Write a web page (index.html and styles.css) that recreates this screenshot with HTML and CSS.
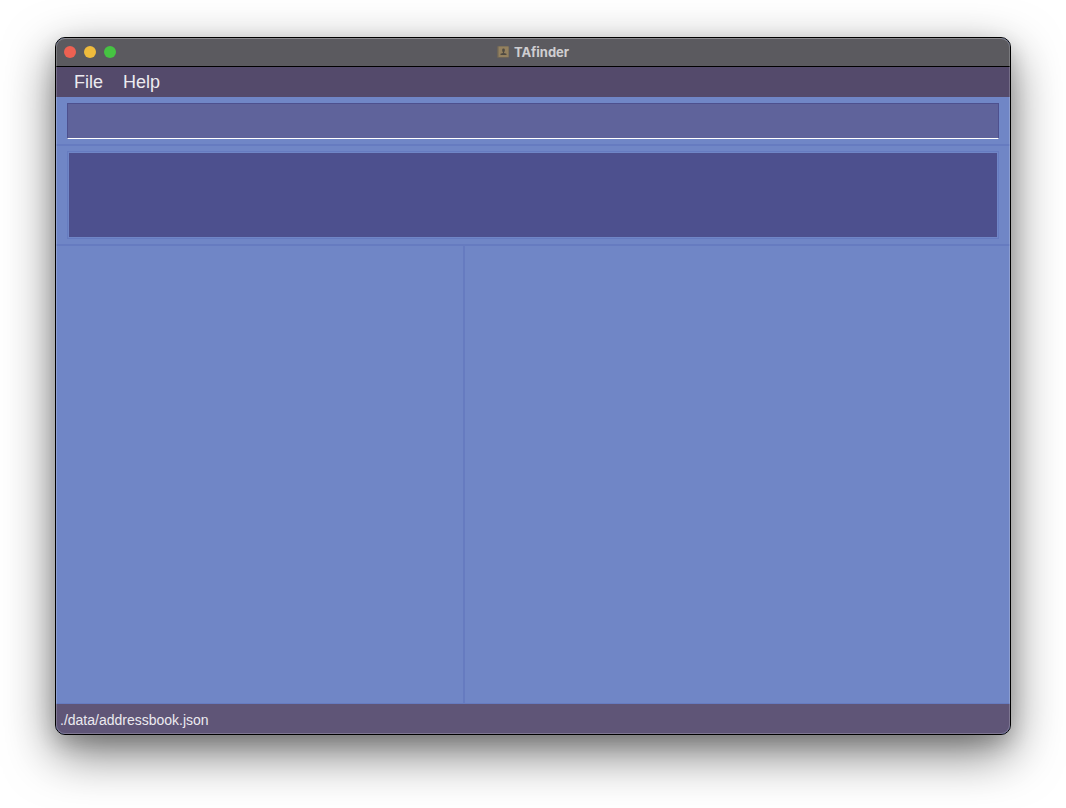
FILE: index.html
```html
<!DOCTYPE html>
<html lang="en">
<head>
<meta charset="utf-8">
<title>TAfinder</title>
<link rel="stylesheet" href="styles.css">
</head>
<body>
<div class="window">
  <header class="titlebar">
    <div class="controls">
      <button class="control close" aria-label="Close"></button>
      <button class="control minimize" aria-label="Minimize"></button>
      <button class="control zoom" aria-label="Zoom"></button>
    </div>
    <h1 class="title">
      <svg class="app-icon" viewBox="0 0 12 12" aria-hidden="true">
        <rect width="12" height="12" rx="1" fill="#6d6457"/>
        <rect x="1.500" y="0.500" width="10" height="10.500" fill="#94815f"/>
        <rect x="5.200" y="2.500" width="2.600" height="3.500" rx="1.200" fill="#4f4a42"/>
        <path d="M5.900 5.500h1.200v1.500l2.400.7v1.300h-6V7.700l2.400-.7z" fill="#4f4a42"/>
      </svg>
      <span>TAfinder</span>
    </h1>
  </header>
  <nav class="menubar">
    <button class="menu">File</button>
    <button class="menu">Help</button>
  </nav>
  <main class="content">
    <div class="command-pane">
      <input class="command" type="text" aria-label="Command">
    </div>
    <div class="result-pane">
      <textarea class="result" aria-label="Result" readonly></textarea>
    </div>
    <div class="split">
      <section class="list-pane" aria-label="List"></section>
      <section class="detail-pane" aria-label="Details"></section>
    </div>
  </main>
  <footer class="statusbar">./data/addressbook.json</footer>
</div>
</body>
</html>
```
FILE: styles.css
```css
* {
  box-sizing: border-box;
}

body {
  display: flex;
  min-height: 100vh;
  margin: 0;
  padding: 37px 55px 73px;
  background: #fff;
  overflow: hidden;
  font-family: "Liberation Sans", Arial, sans-serif;
}

.window {
  position: relative;
  display: flex;
  flex: 1;
  flex-direction: column;
  border: 1px solid #000;
  border-radius: 10px;
  background: #7086c6;
  overflow: hidden;
  box-shadow: 0 18px 50px rgba(0, 0, 0, 0.55), 0 8px 20px rgba(0, 0, 0, 0.16);
}

/* Light rim just inside the window edge */
.window::after {
  content: "";
  position: absolute;
  inset: 0;
  border: 1px solid rgba(255, 255, 255, 0.2);
  border-top-color: rgba(255, 255, 255, 0.3);
  border-radius: 9px;
  pointer-events: none;
}

.titlebar {
  display: grid;
  grid-template-columns: 1fr auto 1fr;
  align-items: center;
  height: 29px;
  padding: 0 8px;
  border-bottom: 1px solid #000;
  background: #5b5a5f;
}

.controls {
  display: flex;
  gap: 8px;
}

.control {
  width: 12px;
  height: 12px;
  padding: 0;
  border: 0;
  border-radius: 50%;
}

.close {
  background: #ed6152;
}

.minimize {
  background: #efbb3c;
}

.zoom {
  background: #46c342;
}

.title {
  display: flex;
  align-items: center;
  gap: 5px;
  margin: 0;
  color: #cfced1;
  font-family: Inter, "Liberation Sans", sans-serif;
  font-size: 13px;
  line-height: 16px;
  font-weight: 700;
}

.app-icon {
  width: 12px;
  height: 12px;
}

.menubar {
  display: flex;
  gap: 4px;
  height: 30px;
  padding: 0 10px;
  background: #544a6b;
}

.menu {
  padding: 0 8px;
  border: 0;
  background: none;
  color: #eceaf0;
  font-family: inherit;
  font-size: 18px;
  line-height: 30px;
}

.content {
  display: flex;
  flex: 1;
  flex-direction: column;
  border-bottom: 1px solid #667bc0;
}

.command-pane {
  display: flex;
  padding: 6px 11px 5px;
  border-bottom: 2px solid #667bc0;
}

.command {
  flex: 1;
  height: 36px;
  padding: 0 8px;
  border: 1px solid #4d508e;
  border-bottom-color: #fff;
  background: #5f639b;
  color: #fff;
  font: inherit;
  outline: 0;
}

.result-pane {
  display: flex;
  padding: 5px 11px;
  border-bottom: 2px solid #667bc0;
}

.result {
  flex: 1;
  height: 88px;
  padding: 8px;
  border: 1px solid #667bc0;
  outline: 1px solid #7086c6;
  outline-offset: -2px;
  background: #4d508e;
  color: #fff;
  font: inherit;
  resize: none;
}

.split {
  display: grid;
  flex: 1;
  grid-template-columns: 3fr 4fr;
}

.list-pane {
  border-right: 2px solid #667bc0;
}

.statusbar {
  height: 30px;
  padding: 0 4px;
  background: #5f5577;
  color: #eceaf0;
  font-size: 14px;
  line-height: 32px;
}
```
